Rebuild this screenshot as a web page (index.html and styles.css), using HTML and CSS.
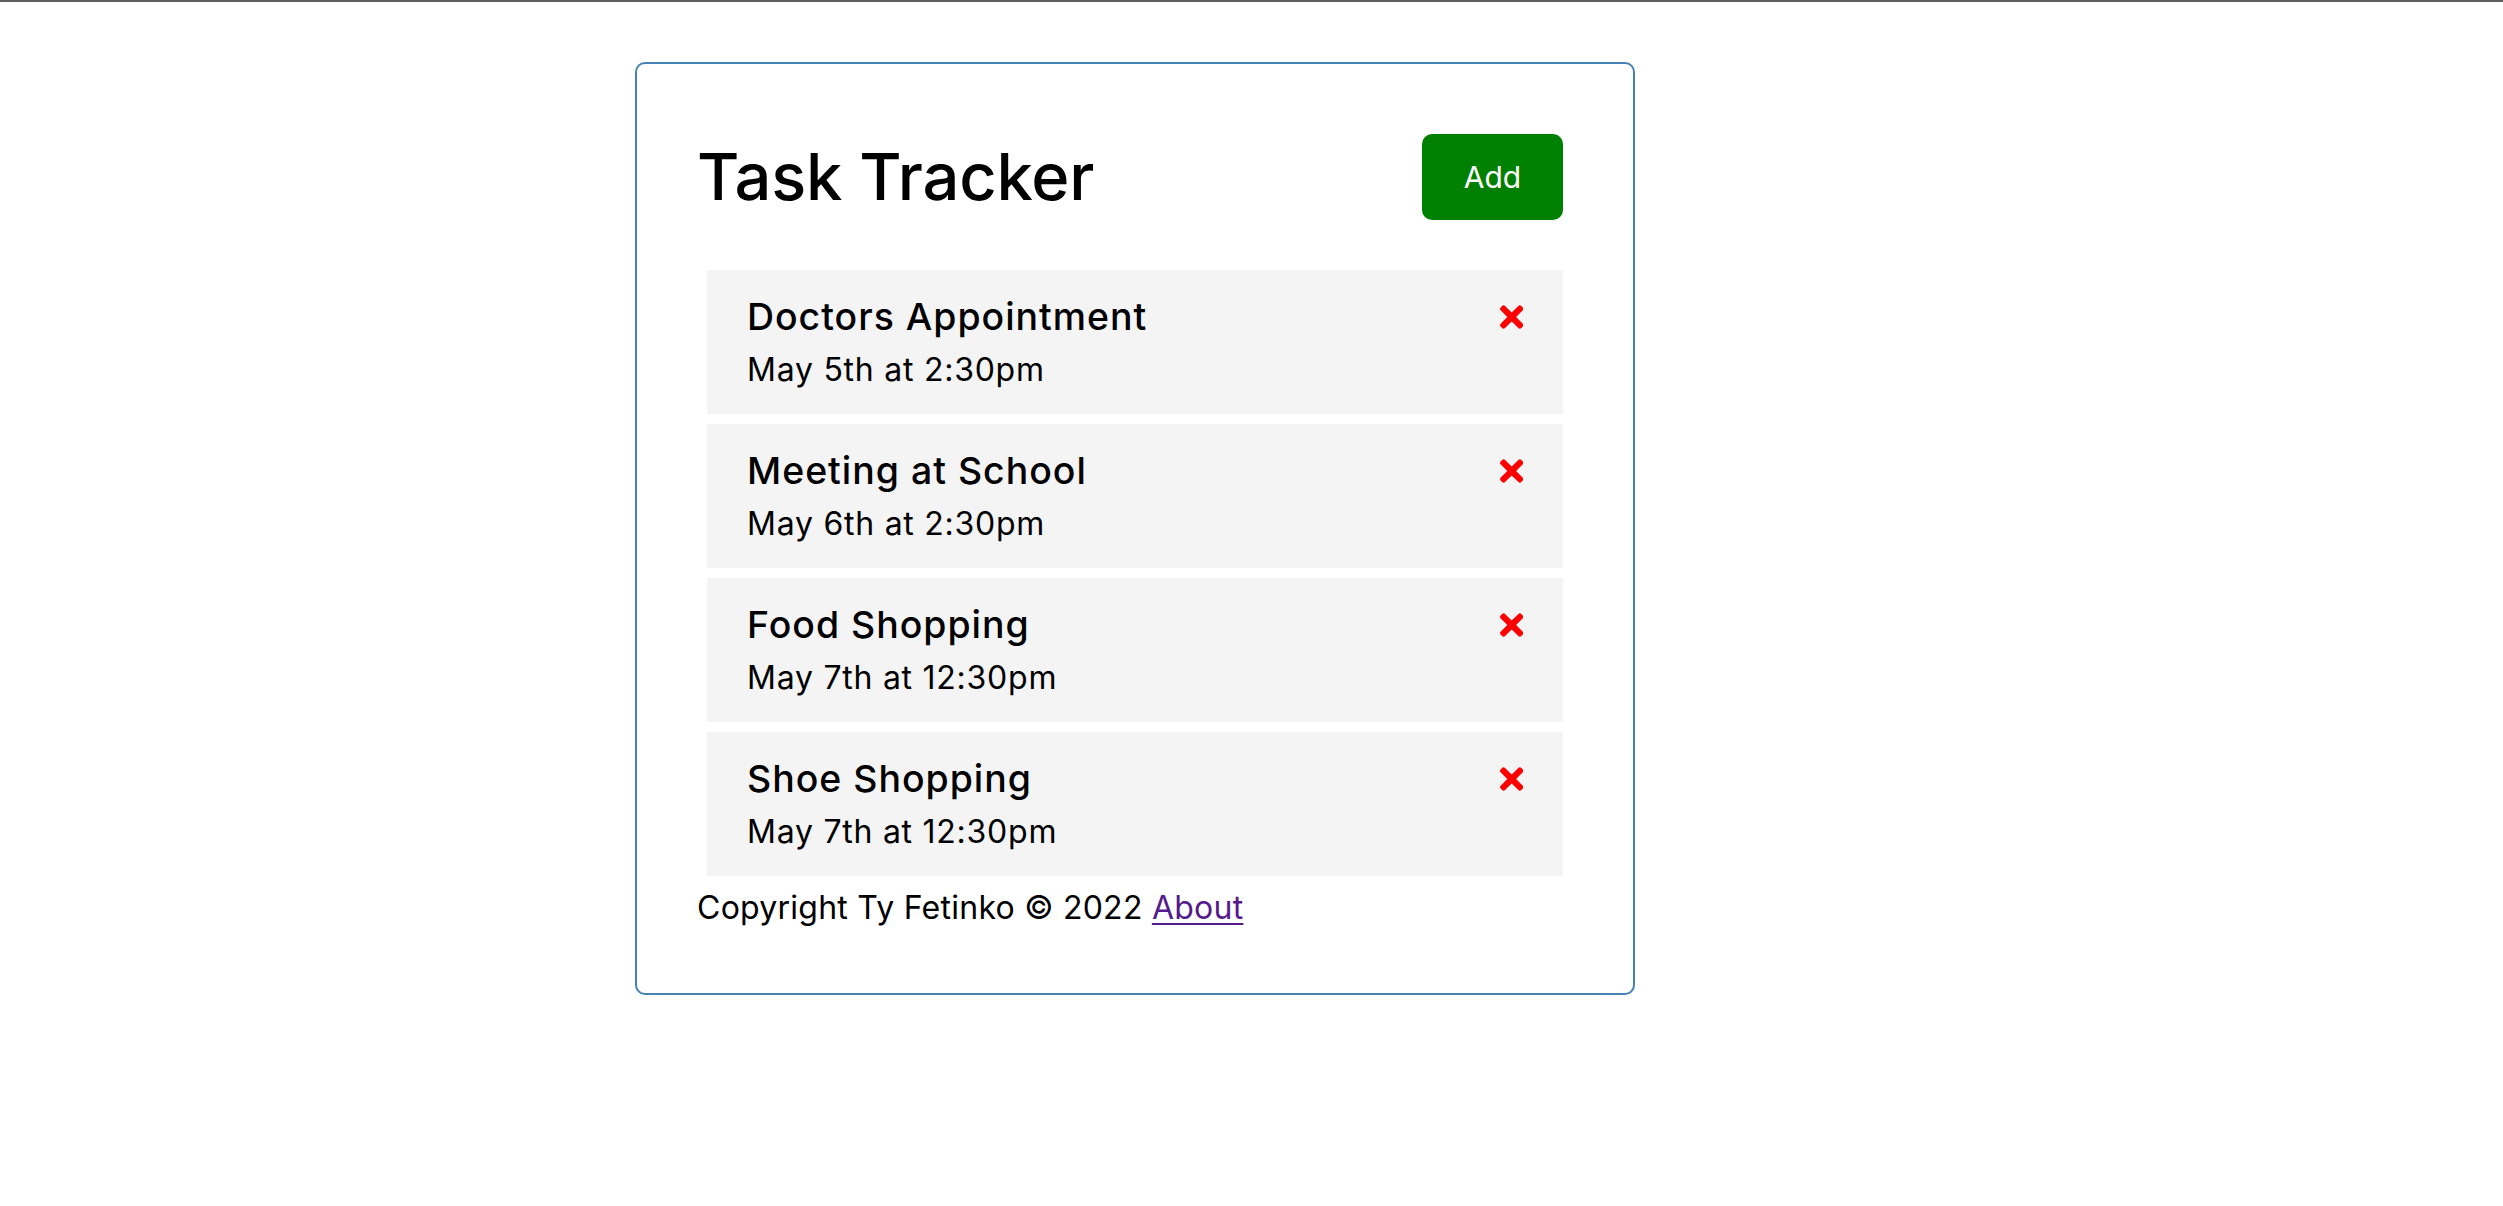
FILE: index.html
```html
<!DOCTYPE html>
<html lang="en">
<head>
<meta charset="utf-8">
<title>Task Tracker</title>
<link rel="stylesheet" href="styles.css">
</head>
<body>
<div class="topbar"></div>
<div class="container">
  <header class="header">
    <h1 class="title">Task Tracker</h1>
    <button class="btn">Add</button>
  </header>
  <div class="tasks">
    <div class="task">
      <h3 class="task-title"><span>Doctors Appointment</span><svg class="del" viewBox="0 0 352 512"><path d="M242.72 256l100.07-100.07c12.28-12.28 12.28-32.19 0-44.48l-22.24-22.24c-12.28-12.28-32.19-12.28-44.48 0L176 189.28 75.93 89.21c-12.28-12.28-32.19-12.28-44.48 0L9.21 111.45c-12.28 12.28-12.28 32.19 0 44.48L109.28 256 9.21 356.07c-12.28 12.28-12.28 32.19 0 44.48l22.24 22.24c12.28 12.28 32.2 12.28 44.48 0L176 322.72l100.07 100.07c12.28 12.28 32.2 12.28 44.48 0l22.24-22.24c12.28-12.28 12.28-32.19 0-44.48L242.72 256z"/></svg></h3>
      <p class="task-date">May 5th at 2:30pm</p>
    </div>
    <div class="task">
      <h3 class="task-title"><span>Meeting at School</span><svg class="del" viewBox="0 0 352 512"><path d="M242.72 256l100.07-100.07c12.28-12.28 12.28-32.19 0-44.48l-22.24-22.24c-12.28-12.28-32.19-12.28-44.48 0L176 189.28 75.93 89.21c-12.28-12.28-32.19-12.28-44.48 0L9.21 111.45c-12.28 12.28-12.28 32.19 0 44.48L109.28 256 9.21 356.07c-12.28 12.28-12.28 32.19 0 44.48l22.24 22.24c12.28 12.28 32.2 12.28 44.48 0L176 322.72l100.07 100.07c12.28 12.28 32.2 12.28 44.48 0l22.24-22.24c12.28-12.28 12.28-32.19 0-44.48L242.72 256z"/></svg></h3>
      <p class="task-date">May 6th at 2:30pm</p>
    </div>
    <div class="task">
      <h3 class="task-title"><span>Food Shopping</span><svg class="del" viewBox="0 0 352 512"><path d="M242.72 256l100.07-100.07c12.28-12.28 12.28-32.19 0-44.48l-22.24-22.24c-12.28-12.28-32.19-12.28-44.48 0L176 189.28 75.93 89.21c-12.28-12.28-32.19-12.28-44.48 0L9.21 111.45c-12.28 12.28-12.28 32.19 0 44.48L109.28 256 9.21 356.07c-12.28 12.28-12.28 32.19 0 44.48l22.24 22.24c12.28 12.28 32.2 12.28 44.48 0L176 322.72l100.07 100.07c12.28 12.28 32.2 12.28 44.48 0l22.24-22.24c12.28-12.28 12.28-32.19 0-44.48L242.72 256z"/></svg></h3>
      <p class="task-date">May 7th at 12:30pm</p>
    </div>
    <div class="task">
      <h3 class="task-title"><span>Shoe Shopping</span><svg class="del" viewBox="0 0 352 512"><path d="M242.72 256l100.07-100.07c12.28-12.28 12.28-32.19 0-44.48l-22.24-22.24c-12.28-12.28-32.19-12.28-44.48 0L176 189.28 75.93 89.21c-12.28-12.28-32.19-12.28-44.48 0L9.21 111.45c-12.28 12.28-12.28 32.19 0 44.48L109.28 256 9.21 356.07c-12.28 12.28-12.28 32.19 0 44.48l22.24 22.24c12.28 12.28 32.2 12.28 44.48 0L176 322.72l100.07 100.07c12.28 12.28 32.2 12.28 44.48 0l22.24-22.24c12.28-12.28 12.28-32.19 0-44.48L242.72 256z"/></svg></h3>
      <p class="task-date">May 7th at 12:30pm</p>
    </div>
  </div>
  <footer class="footer">
    <p>Copyright Ty Fetinko &copy; 2022 <a class="about" href="#about">About</a></p>
  </footer>
</div>
</body>
</html>
```

FILE: styles.css
```css
* {
  box-sizing: border-box;
  margin: 0;
  padding: 0;
}

html, body {
  background: #ffffff;
}

body {
  font-family: Inter, "Open Sans", "Liberation Sans", sans-serif;
  color: #000000;
}

.topbar {
  height: 2px;
  background: #5f5f62;
}

.container {
  width: 1000px;
  margin: 60px 0 0 635px;
  border: 2px solid #4682b4;
  border-radius: 10px;
  padding: 60px;
}

.header {
  display: flex;
  justify-content: space-between;
  align-items: center;
  height: 106px;
  margin-bottom: 30px;
}

.title {
  font-size: 65px;
  font-weight: 500;
  line-height: 90px;
  letter-spacing: -0.2px;
}

.btn {
  width: 141px;
  height: 86px;
  margin: 10px;
  border: none;
  border-radius: 10px;
  background: #008000;
  color: #ffffff;
  font-family: inherit;
  font-size: 30px;
  font-weight: 400;
}

.tasks {
  display: flex;
  flex-direction: column;
  gap: 10px;
  padding: 10px;
}

.task {
  background: #f4f4f4;
  height: 144px;
  padding: 20px 40px;
}

.task-title {
  display: flex;
  justify-content: space-between;
  align-items: center;
  font-size: 37.44px;
  font-weight: 500;
  line-height: 53px;
  letter-spacing: 1px;
}

.del {
  width: 23.4px;
  height: 34px;
  fill: #ff0000;
  flex: none;
}

.task-date {
  margin-top: 2.5px;
  font-size: 32px;
  font-weight: 400;
  line-height: 47px;
  letter-spacing: 0.75px;
}

.footer {
  font-size: 32px;
  font-weight: 400;
  line-height: 44px;
  padding-bottom: 3px;
  letter-spacing: 0.25px;
}

.about {
  color: #551a8b;
  text-decoration: underline;
  text-decoration-thickness: 2px;
  text-underline-offset: 4px;
}
```
